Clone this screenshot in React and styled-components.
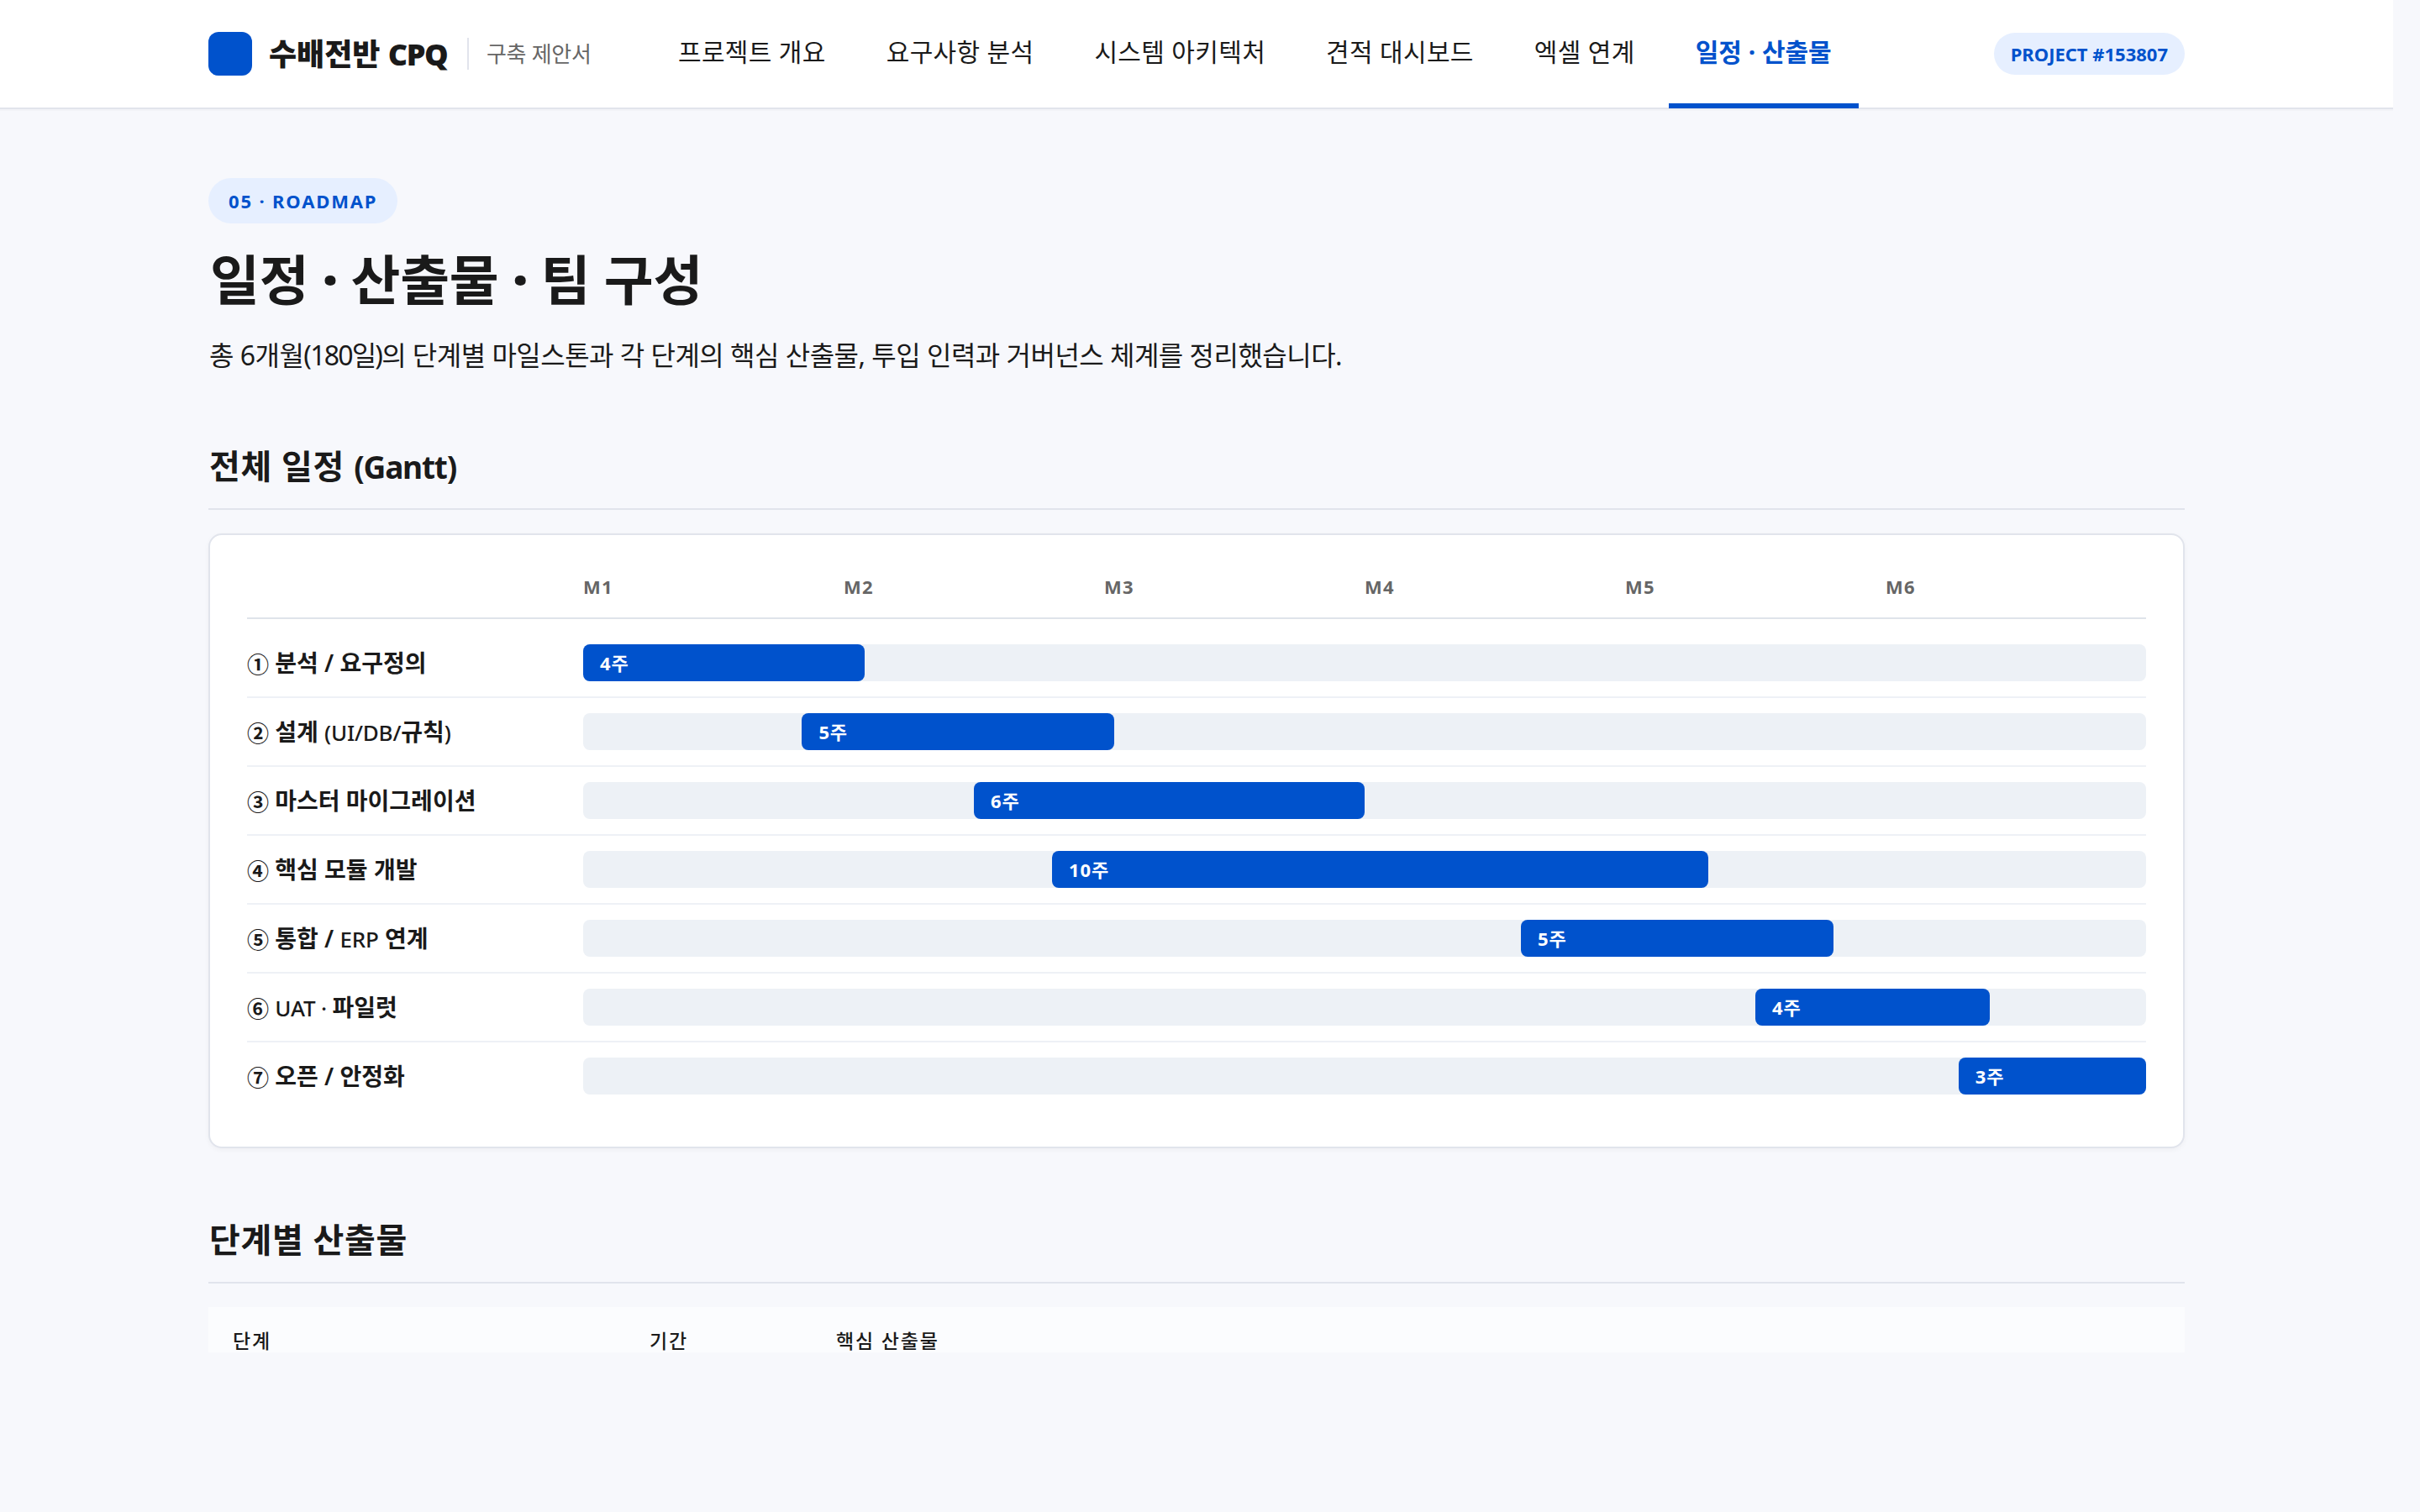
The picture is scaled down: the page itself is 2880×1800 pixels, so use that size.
import React from 'react'
import styled, { createGlobalStyle } from 'styled-components'

const Latin = styled.span`
    font-size: 26px;
    font-weight: 500;
    letter-spacing: -0.2px;
    line-height: 1;
`

const navItems = [
    '프로젝트 개요',
    '요구사항 분석',
    '시스템 아키텍처',
    '견적 대시보드',
    '엑셀 연계',
    '일정 · 산출물',
]

const months = ['M1', 'M2', 'M3', 'M4', 'M5', 'M6']

// start and span are percentages of the six month track
const phases = [
    { no: '①', label: '분석 / 요구정의', weeks: '4주', start: 0, span: 18 },
    { no: '②', label: <>설계 <Latin>(UI/DB/</Latin>규칙<Latin>)</Latin></>, weeks: '5주', start: 14, span: 20 },
    { no: '③', label: '마스터 마이그레이션', weeks: '6주', start: 25, span: 25 },
    { no: '④', label: '핵심 모듈 개발', weeks: '10주', start: 30, span: 42 },
    { no: '⑤', label: <>통합 / <Latin>ERP</Latin> 연계</>, weeks: '5주', start: 60, span: 20 },
    { no: '⑥', label: <><Latin>UAT · </Latin>파일럿</>, weeks: '4주', start: 75, span: 15 },
    { no: '⑦', label: '오픈 / 안정화', weeks: '3주', start: 88, span: 12 },
]

const App = () => {
    return (
        <Page>
            <GlobalStyle />
            <Header>
                <Logo />
                <BrandName>수배전반 <b>CPQ</b></BrandName>
                <BrandSub>구축 제안서</BrandSub>
                <Nav>
                    {navItems.map((item, i) => (
                        <NavLink key={item} href="#" $active={i === navItems.length - 1}>{item}</NavLink>
                    ))}
                </Nav>
                <ProjectTag>PROJECT #153807</ProjectTag>
            </Header>
            <Main>
                <Badge>05 · ROADMAP</Badge>
                <Title>일정 <b>·</b> 산출물 <b>·</b> 팀 구성</Title>
                <Lead>
                    총 6개월<span>(180일)</span>의 단계별 마일스톤과 각 단계의 핵심 산출물, 투입 인력과 거버넌스 체계를 정리했습니다.
                </Lead>

                <SectionTitle>전체 일정 <span>(Gantt)</span></SectionTitle>
                <Card>
                    <GanttHead>
                        {months.map((m) => <Month key={m}>{m}</Month>)}
                    </GanttHead>
                    {phases.map((p) => (
                        <GanttRow key={p.no}>
                            <RowLabel><Num>{p.no}</Num> {p.label}</RowLabel>
                            <Track>
                                <Bar style={{ marginLeft: `${p.start}%`, width: `${p.span}%` }}>{p.weeks}</Bar>
                            </Track>
                        </GanttRow>
                    ))}
                </Card>

                <SectionTitle $after>단계별 산출물</SectionTitle>
                <TableHead>
                    <HeadCell>단계</HeadCell>
                    <HeadCell>기간</HeadCell>
                    <HeadCell>핵심 산출물</HeadCell>
                </TableHead>
            </Main>
        </Page>
    )
}

const GlobalStyle = createGlobalStyle`
    * {
        box-sizing: border-box;
    }

    body {
        margin: 0;
        background: #f7f8fc;
        color: #1a1a1a;
        font-family: "Noto Sans", "Noto Sans CJK KR", sans-serif;
    }
`

const Page = styled.div`
    width: 2848px;
    min-height: 1800px;
`

const Header = styled.header`
    display: flex;
    align-items: center;
    height: 130px;
    padding: 0 248px;
    background: #fff;
    border-bottom: 2px solid #e1e4ec;
    box-shadow: 0 2px 0 rgba(0, 0, 0, 0.02);
    white-space: nowrap;
`

const Logo = styled.div`
    width: 52px;
    height: 52px;
    border-radius: 12px;
    background: #0052cc;
`

const BrandName = styled.div`
    width: 216px;
    margin-left: 20px;
    padding-top: 2px;
    font-size: 36px;
    font-weight: 800;
    line-height: 44px;

    b {
        font-weight: 900;
        letter-spacing: -1.5px;
    }
`

const BrandSub = styled.div`
    display: flex;
    align-items: center;
    width: 147px;
    height: 38px;
    margin-left: 20px;
    padding: 0 0 3px 21px;
    border-left: 2px solid #e1e4ec;
    color: #666;
    font-size: 26px;
    letter-spacing: -0.3px;
`

const Nav = styled.nav`
    display: flex;
    align-self: stretch;
    gap: 8px;
    margin: 0 0 -1px 72px;
`

const NavLink = styled.a`
    padding: 0 32px;
    border-bottom: 6px solid ${({ $active }) => ($active ? '#0052cc' : 'transparent')};
    color: ${({ $active }) => ($active ? '#0052cc' : '#1a1a1a')};
    font-size: 30px;
    font-weight: ${({ $active }) => ($active ? 700 : 400)};
    letter-spacing: ${({ $active }) => ($active ? '0' : '0.33px')};
    line-height: 123px;
    text-decoration: none;
`

const ProjectTag = styled.div`
    margin-left: auto;
    padding: 0 20px;
    border-radius: 25px;
    background: #e6efff;
    color: #0052cc;
    font-size: 22px;
    font-weight: 700;
    line-height: 50px;
`

const Main = styled.main`
    padding: 82px 248px 0;
`

const Badge = styled.span`
    display: block;
    width: fit-content;
    padding: 0 24px;
    border-radius: 27px;
    background: #e6efff;
    color: #0052cc;
    font-size: 22px;
    font-weight: 700;
    letter-spacing: 1.85px;
    line-height: 54px;
`

const Title = styled.h1`
    margin: 25px 0 23px 2px;
    font-size: 64px;
    font-weight: 700;
    letter-spacing: -0.24px;
    line-height: 84px;

    b {
        font-weight: 900;
        letter-spacing: -1px;
    }
`

const Lead = styled.p`
    margin: 0 0 77px 1px;
    font-size: 32px;
    letter-spacing: -0.52px;
    line-height: 50px;

    span {
        letter-spacing: -1.8px;
    }
`

const SectionTitle = styled.h2`
    margin: ${({ $after }) => ($after ? '79px' : '0')} 0 28px;
    padding: 0 0 20px 1px;
    border-bottom: 2px solid #e1e4ec;
    font-size: 40px;
    font-weight: 700;
    letter-spacing: 0.7px;
    line-height: 60px;

    span {
        font-size: 37px;
        letter-spacing: -1.2px;
        line-height: 1;
    }
`

const Card = styled.section`
    padding: 44px;
    border: 2px solid #e1e4ec;
    border-radius: 16px;
    background: #fff;
    box-shadow: 0 2px 6px rgba(0, 0, 0, 0.04);
`

const GanttHead = styled.div`
    display: grid;
    grid-template-columns: repeat(6, 1fr);
    margin-bottom: 12px;
    padding: 0 0 20px 400px;
    border-bottom: 2px solid #dfe4ea;
`

const Month = styled.div`
    color: #666;
    font-size: 22px;
    font-weight: 700;
    letter-spacing: 1.2px;
    line-height: 34px;
`

const GanttRow = styled.div`
    display: grid;
    grid-template-columns: 400px 1fr;
    align-items: center;
    padding: 18px 0;
    border-bottom: 2px solid #eef1f6;

    &:last-child {
        border-bottom: none;
    }
`

const RowLabel = styled.div`
    height: 44px;
    font-size: 28px;
    font-weight: 600;
    line-height: 44px;
    white-space: nowrap;
`

const Num = styled.span`
    display: inline-block;
    width: 26px;
    font-size: 26px;
    font-weight: 600;
    line-height: 1;
    vertical-align: -1px;
`

const Track = styled.div`
    height: 44px;
    border-radius: 8px;
    background: #edf1f6;
`

const Bar = styled.div`
    height: 44px;
    padding-left: 20px;
    border-radius: 8px;
    background: #0052cc;
    color: #fff;
    font-size: 22px;
    font-weight: 700;
    letter-spacing: 0.9px;
    line-height: 44px;
`

const TableHead = styled.div`
    display: grid;
    grid-template-columns: 496px 222px 1fr;
    height: 54px;
    overflow: hidden;
    background: #fbfcfe;
`

const HeadCell = styled.div`
    padding: 26px 28px 0 29px;
    font-size: 23px;
    font-weight: 500;
    letter-spacing: 1.84px;
    line-height: 28px;
`

export default App
